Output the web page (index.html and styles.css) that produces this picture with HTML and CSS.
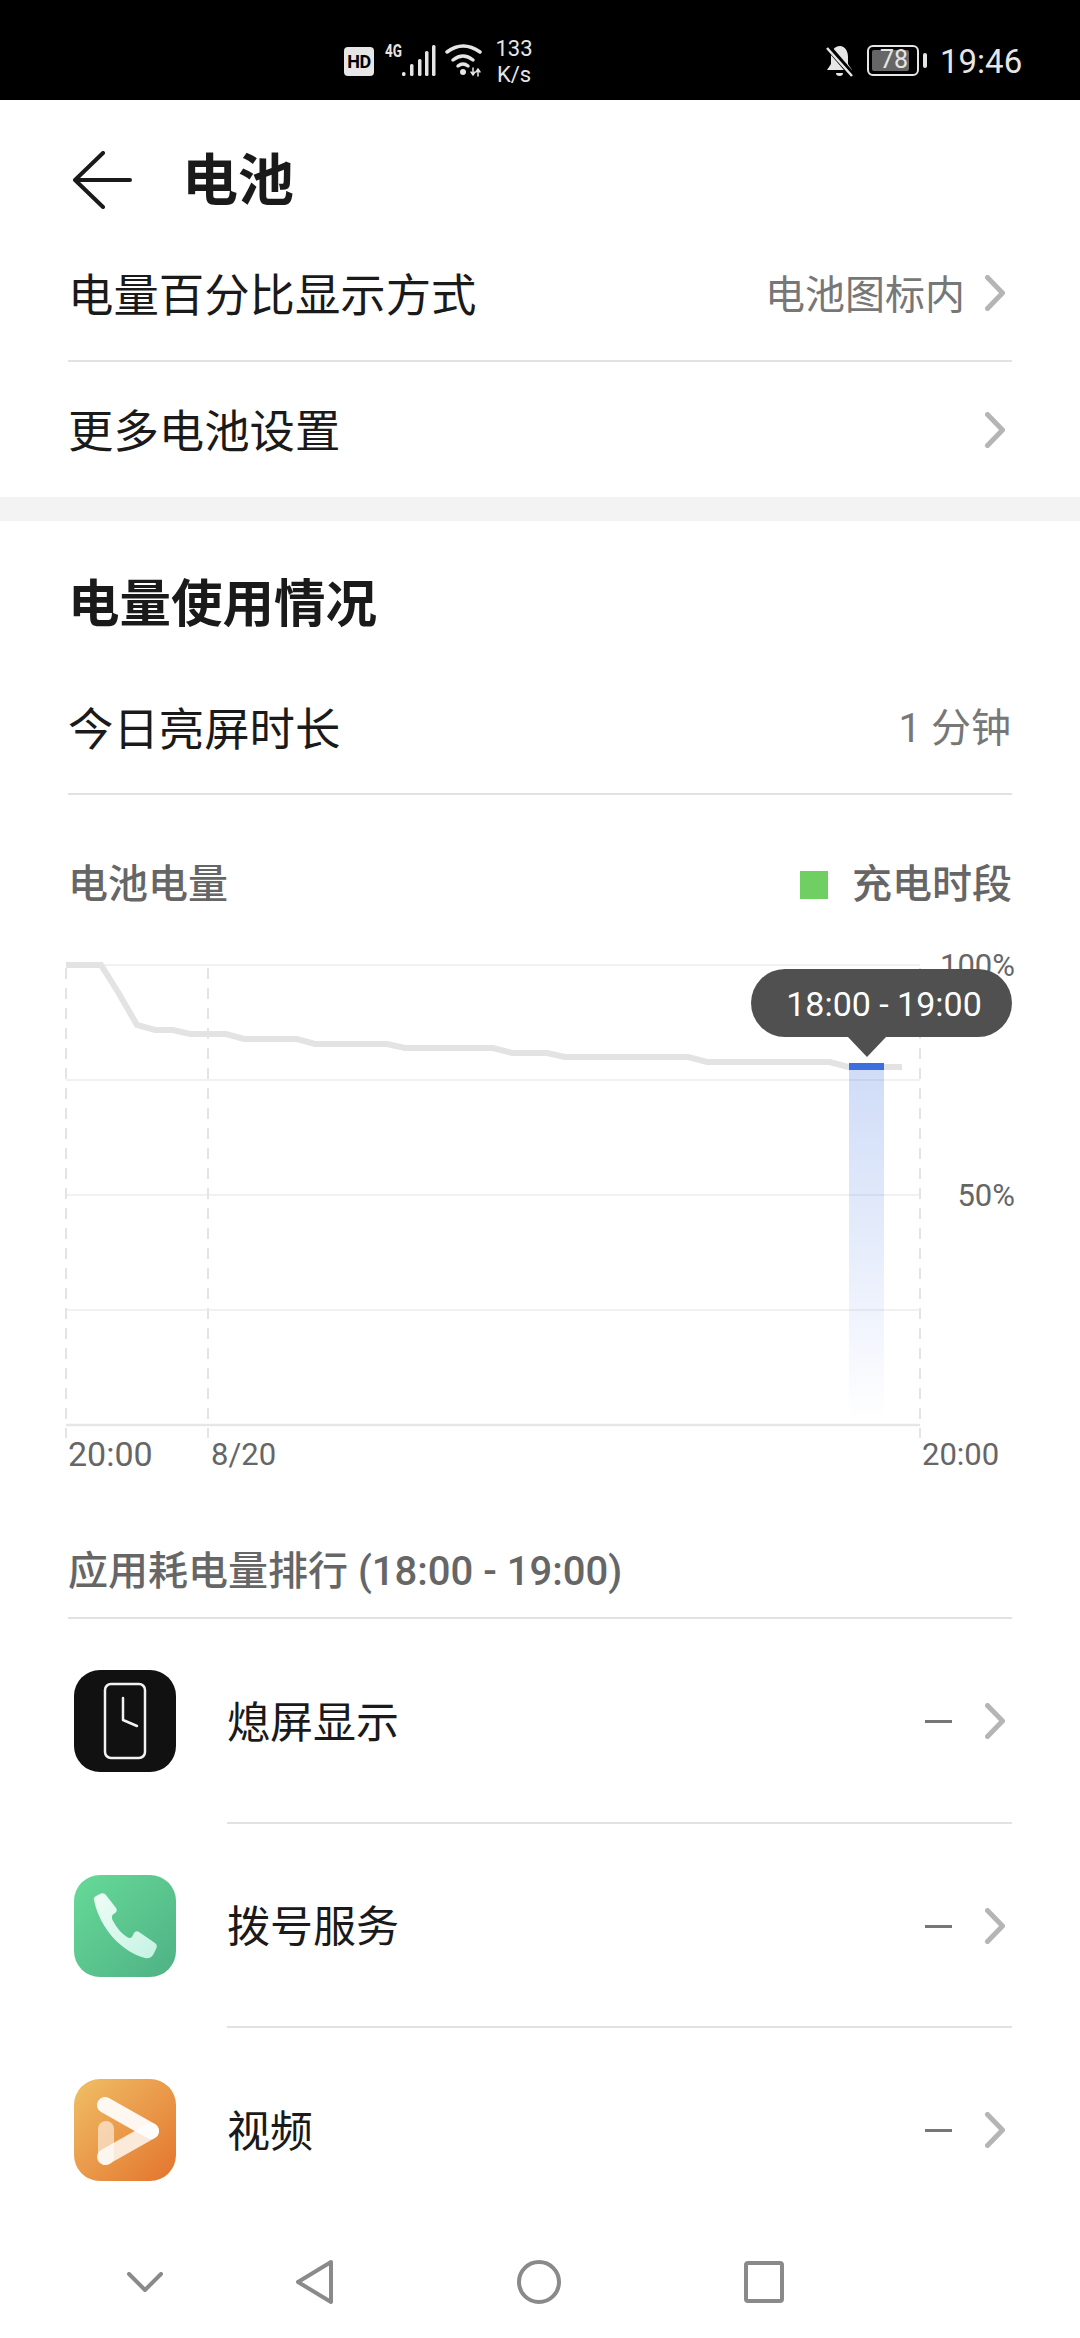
FILE: index.html
```html
<!DOCTYPE html>
<html>
  <head>
    <title>电池</title>
    <link rel="stylesheet" href="styles.css">
  </head>
  <body>
    <div class="status">
      <span class="hd">HD</span>
      <span class="net">4G</span>
      <svg class="signal" width="34" height="32" viewBox="0 0 34 32" fill="#e6e6e6">
        <rect x="0" y="27" width="3.5" height="4" rx="1.5"/>
        <rect x="8" y="19" width="3.5" height="12" rx="1.5"/>
        <rect x="16" y="14" width="3.5" height="17" rx="1.5"/>
        <rect x="23" y="6" width="3.5" height="25" rx="1.5"/>
        <rect x="30" y="0" width="3.5" height="31" rx="1.5"/>
      </svg>
      <svg class="wifi" width="40" height="33" viewBox="0 0 40 33" fill="none" stroke="#e6e6e6" stroke-width="3.5" stroke-linecap="round">
        <path d="M3 8Q19 -4 36 8"/>
        <path d="M9 16Q19 8 29 16"/>
        <path d="M14 22Q19 18 24 22"/>
        <circle cx="19" cy="28" r="3" fill="#e6e6e6" stroke="none"/>
        <path d="M29 24v7M27 28l2 3 2-3M34 32v-7M32 28l2-3 2 3" stroke-width="1.5"/>
      </svg>
      <div class="speed"><span>133</span><span>K/s</span></div>
      <svg class="bell" width="28" height="32" viewBox="0 0 28 32">
        <path d="M14 1C8 1 5 6 5 12L5 19 1 25 26 25 22 19 22 12C22 6 19 1 14 1Z" fill="#e6e6e6"/>
        <path d="M10 28h7a3.5 3 0 0 1-7 0Z" fill="#e6e6e6"/>
        <path d="M2 2L27 31" stroke="#000" stroke-width="6"/>
        <path d="M1 3L26 31" stroke="#e6e6e6" stroke-width="2.5"/>
      </svg>
      <div class="battery"><span class="battery-fill"></span><span class="battery-num">78</span></div>
      <span class="battery-tip"></span>
      <span class="clock">19:46</span>
    </div>

    <div class="page">
      <div class="header">
        <svg class="back" width="60" height="58" viewBox="0 0 60 58" fill="none" stroke="#1a1a1a" stroke-width="4" stroke-linecap="round" stroke-linejoin="round">
          <path d="M31 2L3 29 31 56M3 29H58"/>
        </svg>
        <span class="title">电池</span>
      </div>

      <div class="group">
        <div class="row">
          <span class="row-name">电量百分比显示方式</span>
          <span class="row-value">电池图标内</span>
          <svg class="chevron" width="20" height="36" viewBox="0 0 20 36"><path d="M2.5 2.5L17.5 18 2.5 33.5"/></svg>
        </div>
        <div class="row no-line">
          <span class="row-name">更多电池设置</span>
          <svg class="chevron" width="20" height="36" viewBox="0 0 20 36"><path d="M2.5 2.5L17.5 18 2.5 33.5"/></svg>
        </div>
      </div>

      <div class="band"></div>

      <div class="group">
        <h2 class="heading">电量使用情况</h2>
        <div class="row today">
          <span class="row-name">今日亮屏时长</span>
          <span class="row-value flush">1 分钟</span>
        </div>
        <div class="chart-head">
          <span class="chart-name">电池电量</span>
          <span class="legend"><i class="legend-box"></i>充电时段</span>
        </div>
      </div>

      <div class="chart">
        <svg width="1080" height="540" viewBox="0 940 1080 540" fill="none">
          <defs>
            <linearGradient id="barFade" x1="0" y1="0" x2="0" y2="1">
              <stop offset="0" stop-color="#3b6fe0" stop-opacity="0.24"/>
              <stop offset="0.5" stop-color="#3b6fe0" stop-opacity="0.13"/>
              <stop offset="1" stop-color="#3b6fe0" stop-opacity="0"/>
            </linearGradient>
          </defs>
          <g stroke="#f1f1f1" stroke-width="2">
            <path d="M66 965H920M66 1080H920M66 1195H920M66 1310H920"/>
          </g>
          <path d="M66 1425H920" stroke="#e6e6e6" stroke-width="2.5"/>
          <g stroke="#e4e4e4" stroke-width="2" stroke-dasharray="11 9">
            <path d="M66 968V1438M208 968V1438M920 968V1438"/>
          </g>
          <rect x="849" y="1070" width="35" height="350" fill="url(#barFade)"/>
          <path d="M66 965H101L118 992 137 1025 155 1030H173L190 1034H226L244 1039H297L315 1044H387L405 1048H493L512 1053H547L565 1057H688L707 1062H830L848 1067H902" stroke="#e3e3e3" stroke-width="6"/>
          <rect x="849" y="1063" width="35" height="7" fill="#3b6fe0"/>
        </svg>
        <span class="axis pct-top">100%</span>
        <span class="axis pct-mid">50%</span>
        <span class="axis time-start">20:00</span>
        <span class="axis date">8/20</span>
        <span class="axis time-end">20:00</span>
        <div class="tip">18:00 - 19:00</div>
      </div>

      <div class="group">
        <div class="rank-title">应用耗电量排行 (18:00 - 19:00)</div>
      </div>

      <div class="apps">
        <div class="app">
          <svg class="app-icon" width="102" height="102" viewBox="0 0 102 102">
            <rect width="102" height="102" rx="26" fill="#111"/>
            <rect x="31" y="14" width="40" height="74" rx="6" fill="none" stroke="#f2f2f2" stroke-width="2.5"/>
            <path d="M49 28V50L63 56" fill="none" stroke="#f2f2f2" stroke-width="2.5" stroke-linecap="round" stroke-linejoin="round"/>
          </svg>
          <div class="app-body">
            <span class="app-name">熄屏显示</span>
            <span class="dash"></span>
            <svg class="chevron" width="20" height="36" viewBox="0 0 20 36"><path d="M2.5 2.5L17.5 18 2.5 33.5"/></svg>
          </div>
        </div>
        <div class="app">
          <svg class="app-icon" width="102" height="102" viewBox="0 0 102 102">
            <defs>
              <linearGradient id="phoneBg" x1="0" y1="0" x2="1" y2="1">
                <stop offset="0" stop-color="#66da98"/>
                <stop offset="1" stop-color="#4fb184"/>
              </linearGradient>
              <linearGradient id="phoneFg" x1="0" y1="0" x2="1" y2="1">
                <stop offset="0" stop-color="#eefdf7"/>
                <stop offset="1" stop-color="#c4f3e2"/>
              </linearGradient>
            </defs>
            <rect width="102" height="102" rx="26" fill="url(#phoneBg)"/>
            <path d="M20 25Q19 23 22 21L27 18.5Q30 17.5 32 20L42 33Q44 36 41 38L38.5 40Q37 42 39 46Q45 57 53 62Q56 64 58 62L60 58Q62 55 65 57L81 68Q84 70 82 74L79 80Q76 84 71 83C50 78 26 55 20 25Z" fill="url(#phoneFg)"/>
          </svg>
          <div class="app-body">
            <span class="app-name">拨号服务</span>
            <span class="dash"></span>
            <svg class="chevron" width="20" height="36" viewBox="0 0 20 36"><path d="M2.5 2.5L17.5 18 2.5 33.5"/></svg>
          </div>
        </div>
        <div class="app">
          <svg class="app-icon" width="102" height="102" viewBox="0 0 102 102">
            <defs>
              <linearGradient id="videoBg" x1="0" y1="0" x2="1" y2="1">
                <stop offset="0" stop-color="#f0bf66"/>
                <stop offset="1" stop-color="#e3742d"/>
              </linearGradient>
            </defs>
            <rect width="102" height="102" rx="26" fill="url(#videoBg)"/>
            <g fill="none" stroke-width="16" stroke-linecap="round">
              <path d="M32 50V78" stroke="#fff" stroke-opacity="0.55"/>
              <path d="M31 26L77 52" stroke="#fff" stroke-opacity="0.92"/>
              <path d="M77 52L31 78" stroke="#fff" stroke-opacity="0.8"/>
            </g>
          </svg>
          <div class="app-body">
            <span class="app-name">视频</span>
            <span class="dash"></span>
            <svg class="chevron" width="20" height="36" viewBox="0 0 20 36"><path d="M2.5 2.5L17.5 18 2.5 33.5"/></svg>
          </div>
        </div>
      </div>
    </div>

    <div class="nav">
      <svg class="nav-down" width="36" height="20" viewBox="0 0 36 20"><path d="M2 2L18 18 34 2"/></svg>
      <svg class="nav-back" width="40" height="46" viewBox="0 0 40 46"><path d="M36 3L3 23 36 43Z"/></svg>
      <svg class="nav-home" width="44" height="44" viewBox="0 0 44 44"><circle cx="22" cy="22" r="20"/></svg>
      <svg class="nav-recent" width="40" height="42" viewBox="0 0 40 42"><rect x="2" y="2" width="36" height="38" rx="2"/></svg>
    </div>
  </body>
</html>
```

FILE: styles.css
```css
* {
  box-sizing: border-box;
}
body {
  margin: 0;
  width: 1080px;
  height: 2338px;
  overflow: hidden;
  display: flex;
  flex-direction: column;
  background-color: #fff;
  color: #1a1a1a;
  font-family: Roboto, "Noto Sans CJK SC", sans-serif;
}

/* status bar */
.status {
  height: 100px;
  flex: none;
  display: flex;
  align-items: flex-start;
  padding-left: 344px;
  background-color: #000;
  color: #e6e6e6;
}
.hd {
  width: 30px;
  height: 29px;
  margin-top: 47px;
  border-radius: 4px;
  background-color: #e6e6e6;
  color: #000;
  font-size: 18px;
  font-weight: 700;
  line-height: 29px;
  text-align: center;
  letter-spacing: -0.5px;
}
.net {
  width: 18px;
  margin-top: 42px;
  margin-left: 11px;
  font-size: 18px;
  font-weight: 700;
  line-height: 18px;
  transform: scaleX(0.75);
  transform-origin: left;
}
.signal {
  margin-top: 45px;
  margin-left: -1px;
}
.wifi {
  margin-top: 44px;
  margin-left: 8px;
}
.speed {
  width: 38px;
  margin-top: 36px;
  margin-left: 11px;
  display: flex;
  flex-direction: column;
  align-items: center;
  font-size: 22px;
  line-height: 26px;
}
.bell {
  margin-top: 45px;
  margin-left: 293px;
}
.battery {
  position: relative;
  width: 52px;
  height: 31px;
  margin-top: 45px;
  margin-left: 13px;
  border: 2.5px solid #e6e6e6;
  border-radius: 6px;
}
.battery-fill {
  display: block;
  width: 37px;
  height: 21px;
  margin: 2.5px 0 0 2.5px;
  border-radius: 2px;
  background-color: #666;
}
.battery-num {
  position: absolute;
  left: 11px;
  top: 0;
  font-size: 25px;
  line-height: 26px;
}
.battery-tip {
  width: 4px;
  height: 15px;
  margin-top: 53px;
  margin-left: 4px;
  border-radius: 2px;
  background-color: #e6e6e6;
}
.clock {
  margin-top: 42px;
  margin-left: 13px;
  font-size: 33px;
  line-height: 39px;
}

/* main page */
.page {
  flex: 1;
  overflow: hidden;
}
.header {
  height: 126px;
  padding: 36px 0 0 72px;
  display: flex;
  align-items: center;
}
.back {
  flex: none;
  margin-top: -2px;
}
.title {
  margin-left: 50px;
  font-size: 56px;
  font-weight: 700;
  line-height: 60px;
}
.group {
  padding: 0 68px;
}
.row {
  height: 136px;
  display: flex;
  align-items: center;
  border-bottom: 2px solid #e2e2e2;
}
.row.no-line {
  height: 135px;
  border-bottom: none;
}
.row.today {
  height: 133px;
}
.row-name {
  flex: 1;
  margin-top: 7px;
  font-size: 45.4px;
  line-height: 60px;
}
.row-value {
  margin-top: 6px;
  margin-right: 20px;
  color: #777;
  font-size: 40px;
  line-height: 50px;
}
.row-value.flush {
  margin-top: 2px;
  margin-right: 1px;
}
.chevron {
  flex: none;
  margin-right: 7px;
  fill: none;
  stroke: #b5b5b5;
  stroke-width: 5;
  stroke-linecap: round;
  stroke-linejoin: round;
}
.band {
  height: 24px;
  background-color: #f3f3f3;
}
.heading {
  height: 141px;
  margin: 0;
  padding-top: 54px;
  font-size: 51.5px;
  font-weight: 700;
  line-height: 60px;
}

/* chart */
.chart-head {
  height: 145px;
  padding-top: 65px;
  display: flex;
  justify-content: space-between;
  align-items: flex-start;
  color: #666;
  font-size: 40px;
  line-height: 50px;
}
.chart-name {
  font-weight: 500;
}
.legend {
  display: flex;
  align-items: center;
  font-weight: 500;
}
.legend-box {
  width: 28px;
  height: 28px;
  margin-right: 24px;
  background-color: #6fcf63;
}
.chart {
  position: relative;
  height: 540px;
}
.chart svg {
  display: block;
}
.axis {
  position: absolute;
  color: #666;
  font-size: 31px;
  line-height: 36px;
}
.pct-top {
  right: 65px;
  top: 8px;
}
.pct-mid {
  right: 65px;
  top: 238px;
}
.time-start {
  left: 68px;
  top: 496px;
  font-size: 34px;
}
.date {
  left: 211px;
  top: 497px;
}
.time-end {
  left: 922px;
  top: 497px;
}
.tip {
  position: absolute;
  left: 751px;
  top: 29px;
  width: 261px;
  height: 68px;
  padding: 1px 0 0 5px;
  border-radius: 34px;
  background-color: #505050;
  color: #fff;
  font-size: 34px;
  line-height: 68px;
  text-align: center;
}
.tip::after {
  content: "";
  position: absolute;
  left: 97px;
  top: 68px;
  border-left: 19px solid transparent;
  border-right: 19px solid transparent;
  border-top: 20px solid #505050;
}
.rank-title {
  height: 139px;
  padding-top: 67px;
  border-bottom: 2px solid #e2e2e2;
  color: #666;
  font-size: 40px;
  font-weight: 500;
  line-height: 50px;
}

/* app list */
.app {
  height: 204.5px;
  padding: 0 68px 0 74px;
  display: flex;
  align-items: center;
}
.app-icon {
  flex: none;
  margin-right: 51px;
}
.app-body {
  flex: 1;
  align-self: stretch;
  display: flex;
  align-items: center;
  border-bottom: 2px solid #e2e2e2;
}
.app-name {
  flex: 1;
  margin-top: 5px;
  font-size: 43px;
  line-height: 56px;
}
.dash {
  width: 27px;
  height: 3px;
  margin-top: 3px;
  margin-right: 33px;
  background-color: #777;
}
.app-body .chevron {
  margin-top: 2px;
}

/* navigation bar */
.nav {
  height: 128px;
  flex: none;
  padding: 16px 0 0 127px;
  display: flex;
  align-items: center;
  background-color: #fff;
}
.nav svg {
  flex: none;
  fill: none;
  stroke: #8a8a8a;
  stroke-width: 4;
  stroke-linecap: round;
  stroke-linejoin: round;
}
.nav-back {
  margin-left: 132px;
}
.nav-home {
  margin-left: 182px;
}
.nav-recent {
  margin-left: 183px;
}
```
